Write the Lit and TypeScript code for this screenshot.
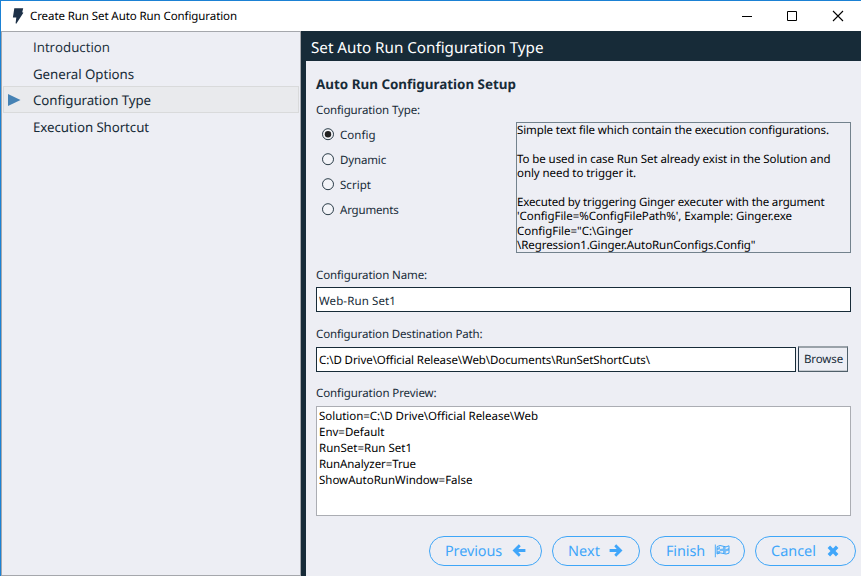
import { LitElement, html, css, svg } from "lit";
import { customElement, property, state } from "lit/decorators.js";
import { classMap } from "lit/directives/class-map.js";

/** Single line of text whose tracking is adjusted to reach a given width. */
@customElement("fit-text")
class FitText extends LitElement {
  @property({ type: Number }) w = 0;
  @property() text = "";
  @state() private tracking = 0;

  static styles = css`
    :host { display: flex; white-space: pre; }
    .t { display: block; text-rendering: geometricPrecision; transform: translateY(var(--drop, 1px)); }
  `;

  firstUpdated() {
    const el = this.renderRoot.querySelector(".t") as HTMLElement;
    const natural = el.getBoundingClientRect().width;
    if (this.w) this.tracking = (this.w - natural) / this.text.length;
  }

  render() {
    return html`<span class="t" style="letter-spacing:${this.tracking}px">${this.text}</span>`;
  }
}

const t = (text: string, w: number) => html`<fit-text .text=${text} .w=${w}></fit-text>`;

const steps: [string, number][] = [
  ["Introduction", 77],
  ["General Options", 101],
  ["Configuration Type", 118],
  ["Execution Shortcut", 116],
];

const types: [string, number][] = [
  ["Config", 35.5],
  ["Dynamic", 46],
  ["Script", 31],
  ["Arguments", 58.5],
];

const description: [string, number][] = [
  ["Simple text file which contain the execution configurations.", 312],
  ["", 0],
  ["To be used in case Run Set already exist in the Solution and", 313.5],
  ["only need to trigger it.", 119],
  ["", 0],
  ["Executed by triggering Ginger executer with the argument", 307.5],
  ["'ConfigFile=%ConfigFilePath%', Example: Ginger.exe", 275],
  ['ConfigFile="C:\\Ginger', 116],
  ['\\Regression1.Ginger.AutoRunConfigs.Config"', 238.5],
];

const preview: [string, number][] = [
  ["Solution=C:\\D Drive\\Official Release\\Web", 219],
  ["Env=Default", 65.5],
  ["RunSet=Run Set1", 93],
  ["RunAnalyzer=True", 97],
  ["ShowAutoRunWindow=False", 153.5],
];

const arrow = svg`<path d="M6.8 .3 L8.7 2.2 L6.3 4.9 H13.4 V8.1 H6.3 L8.7 10.8 L6.8 12.7 L.5 6.5 Z"/>`;
const icons = {
  previous: html`<svg width="14" height="14" viewBox="0 0 14 14">${arrow}</svg>`,
  next: html`<svg width="14" height="14" viewBox="0 0 14 14"><g transform="translate(14 0) scale(-1 1)">${arrow}</g></svg>`,
  finish: html`<svg width="16" height="14" viewBox="0 0 16 14">
    <path d="M.8 .5h1.2v12.7H.8z" opacity=".75"/>
    <path d="M3 2.6 Q6 .6 9 2.2 T15 1.8 V9.2 Q12 10.8 9 9.4 T3 10z" fill="none" stroke="currentColor" stroke-width="1"/>
    <path d="M3 4.2 L6 2.4 V5 L9 4.4 V2.6 L11.6 3 V5.2 L15 4 V6.6 L11.8 7.4 V9.6 L9 9 V7 L6 7.2 V9.2 L3 9.8 V7.4 L6 6.6 V5.6 L3 6z" opacity=".72"/>
  </svg>`,
  cancel: html`<svg width="12" height="12" viewBox="0 0 12 12"><path d="M3.1 .6 L6 3.5 L8.9 .6 L11.4 3.1 L8.5 6 L11.4 8.9 L8.9 11.4 L6 8.5 L3.1 11.4 L.6 8.9 L3.5 6 L.6 3.1Z"/></svg>`,
};

@customElement("app-root")
class AppRoot extends LitElement {
  @state() private type = 0;

  static styles = css`
    :host {
      display: block;
      font: 11.5px/16px "Noto Sans", sans-serif;
      color: #172b38;
    }
    * { box-sizing: border-box; }
    svg { display: block; fill: currentColor; }
    .window {
      width: 861px;
      height: 576px;
      border-top: 1px solid #1b81d4;
      border-left: 1px solid #1b81d4;
      display: flex;
      flex-direction: column;
      background: #fff;
      overflow: hidden;
    }
    .titlebar {
      height: 30px;
      flex: none;
      display: flex;
      align-items: center;
      padding: 0 17px 0 11px;
      color: #000;
    }
    .bolt { color: #1d3148; margin-right: 6px; }
    .controls { margin-left: auto; display: flex; gap: 35px; }
    .body { flex: 1; display: flex; min-height: 0; }
    .side {
      width: 300px;
      border: 1px solid #a5a7ac;
      background: #edeef4;
      padding: 1px 1px 0;
      font-size: 13.3px;
      --drop: 0px;
    }
    .step {
      height: 26.5px;
      display: flex;
      align-items: center;
      padding-left: 4px;
      border: 1px solid transparent;
    }
    .step fit-text { padding-top: 2px; }
    .step.on { background: #e9eaed; border-color: #d9dadb; }
    .mark { width: 25px; color: #4682b4; padding-top: 2px; }
    .main {
      flex: 1;
      border-left: 5px solid #172b38;
      background: #edeef4;
    }
    .header {
      height: 30px;
      background: #172b38;
      color: #fff;
      padding: 5px 5px 0;
      font-size: 15.2px;
      line-height: 22px;
    }
    .content { padding: 13px 10px 0; }
    .heading { font-size: 13.4px; line-height: 20px; font-weight: 700; margin-bottom: 8px; --drop: 0px; }
    .choice { display: grid; grid-template-columns: 200px 335px; margin-top: 4px; }
    .radio { height: 25px; display: flex; align-items: center; padding-left: 6px; gap: 6px; }
    .description {
      height: 131px;
      border: 1px solid #73828d;
      color: #000;
      line-height: 14.4px;
    }
    .description .line { height: 14.4px; }
    .label { line-height: 17px; margin-top: 13px; }
    .label.last { margin-top: 12px; }
    .input {
      height: 25px;
      border: 1px solid #172b38;
      background: #fff;
      padding-left: 2px;
      display: flex;
      align-items: center;
    }
    .name { margin-top: 4px; padding-top: 2px; }
    .path { margin-top: 4px; display: flex; align-items: flex-end; gap: 2px; }
    .path .input { width: 480px; color: #000; }
    .browse {
      width: 50px;
      height: 26px;
      border: 1px solid #4f5f69;
      border-left-color: #26394a;
      border-top: 2px solid #9aa2a9;
      box-shadow: inset 0 -1px #c6cbd1;
      padding: 3px 0 0 5px;
    }
    .preview {
      height: 110px;
      margin-top: 5px;
      border: 1px solid #abadb3;
      background: #fff;
      color: #000;
      padding: 1px 2px 0;
    }
    .actions { display: flex; gap: 10px; margin: 20px -5px 0 113px; }
    .btn {
      height: 30px;
      border: 1.5px solid #3fa6f8;
      border-radius: 15px;
      color: #40a6fa;
      display: flex;
      align-items: center;
      justify-content: space-between;
      font-size: 14.4px;
      line-height: 20px;
      padding: 0 15px;
    }
    .previous { width: 113px; }
    .next { width: 88px; padding-right: 16px; }
    .finish { width: 95px; padding-right: 14px; }
    .cancel { width: 101px; padding-right: 16px; }
    .plain-i { font-family: "Open Sans", sans-serif; }
  `;

  render() {
    return html`<div class="window">
      <div class="titlebar">
        <svg class="bolt" width="12" height="16" viewBox="0 0 12 16"><path d="M2.3 .3H11.2L10.2 4.2 11.4 4.8 4.3 15.7 3.6 15.2 4.3 9.6H.9Z"/></svg>
        ${t("Create Run Set Auto Run Configuration", 207)}
        <div class="controls">
          <svg width="10" height="12"><path d="M0 6h10v1H0z"/></svg>
          <svg width="10" height="12"><path d="M.5 1.5h9v9h-9z" fill="none" stroke="#000"/></svg>
          <svg width="12" height="12"><path d="M1 1l10 10M11 1L1 11" stroke="#000" stroke-width="1.1"/></svg>
        </div>
      </div>
      <div class="body">
        <div class="side">
          ${steps.map(([s, w], i) => html`<div class=${classMap({ step: true, on: i === 2, "plain-i": i === 0 })}>
            <div class="mark">${i === 2 ? html`<svg width="13" height="12"><path d="M0 0L12.5 6L0 12z"/></svg>` : ""}</div>
            ${t(s, w)}
          </div>`)}
        </div>
        <div class="main">
          <div class="header">${t("Set Auto Run Configuration Type", 232.5)}</div>
          <div class="content">
            <div class="heading">${t("Auto Run Configuration Setup", 200)}</div>
            ${t("Configuration Type:", 104)}
            <div class="choice">
              <div>
                ${types.map(([s, w], i) => html`<div class="radio" @click=${() => (this.type = i)}>
                  <svg width="12" height="13"><circle cx="6" cy="6.2" r="5.5" fill="#f3f4f8" stroke="#2b3c48"/>${i === this.type
                    ? svg`<circle cx="6" cy="6.2" r="3.2" fill="#212121"/>` : ""}</svg>
                  ${t(s, w)}
                </div>`)}
              </div>
              <div class="description">${description.map(([s, w]) => html`<div class="line">${s ? t(s, w) : ""}</div>`)}</div>
            </div>
            <div class="label">${t("Configuration Name:", 111)}</div>
            <div class="input name">${t("Web-Run Set1", 77)}</div>
            <div class="label">${t("Configuration Destination Path:", 166.5)}</div>
            <div class="path">
              <div class="input">${t("C:\\D Drive\\Official Release\\Web\\Documents\\RunSetShortCuts\\", 331)}</div>
              <div class="browse">${t("Browse", 39)}</div>
            </div>
            <div class="label last">${t("Configuration Preview:", 120.5)}</div>
            <div class="preview">${preview.map(([s, w]) => t(s, w))}</div>
            <div class="actions">
              <div class="btn previous">${t("Previous", 57)}${icons.previous}</div>
              <div class="btn next">${t("Next", 32)}${icons.next}</div>
              <div class="btn finish">${t("Finish", 39)}${icons.finish}</div>
              <div class="btn cancel">${t("Cancel", 45)}${icons.cancel}</div>
            </div>
          </div>
        </div>
      </div>
    </div>`;
  }
}
